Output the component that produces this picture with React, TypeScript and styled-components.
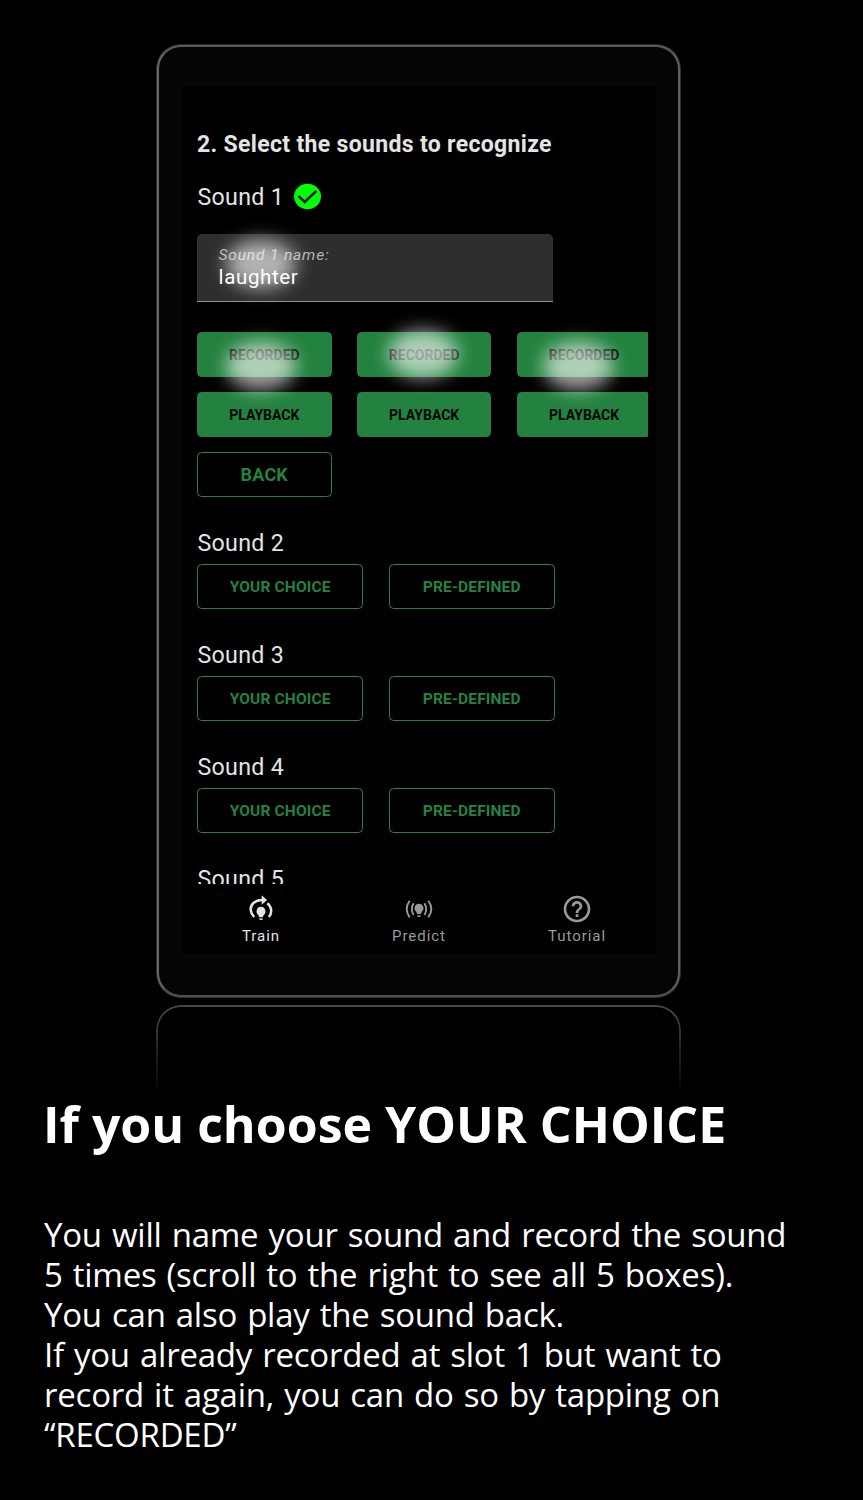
import React from "react";
import styled, { createGlobalStyle } from "styled-components";

const GlobalStyle = createGlobalStyle`
  body { margin: 0; background: #000; }
  * { box-sizing: border-box; }
`;

const Page = styled.main`
  width: 863px;
  height: 1500px;
  padding-top: 45px;
  overflow: hidden;
  background: #000;
  color: #fff;
  font-family: Roboto, "Liberation Sans", sans-serif;
`;

const Device = styled.section`
  width: 523px;
  height: 952px;
  margin-left: 157px;
  padding: 40px 23px;
  background: #050505;
  border: 2px solid;
  border-color: #5a5a5a #606060 #505050 #666;
  border-radius: 24px;
  box-shadow: 0 0 0 1px #2e2e2e;
`;

const Reflection = styled.div`
  width: 525px;
  height: 91px;
  margin: 8px 0 0 156px;
  border: 2px solid #484848;
  border-bottom: 0;
  border-radius: 25px 25px 0 0;
  mask-image: linear-gradient(#000, transparent);
`;

const Screen = styled.div`
  display: flex;
  flex-direction: column;
  width: 474px;
  height: 866px;
  background: #000;
`;

const Content = styled.div`
  height: 797px;
  margin-right: 8px;
  padding: 43px 0 0 15px;
  overflow: hidden;
`;

const Title = styled.h2`
  margin: 0;
  font-size: 23px;
  line-height: 30px;
  font-weight: 700;
  letter-spacing: 0.33px;
  color: #e4e4e4;
  white-space: nowrap;
`;

const Label = styled.div`
  display: flex;
  align-items: center;
  height: 30px;
  padding-left: 0.5px;
  font-size: 23.2px;
  letter-spacing: 0.3px;
  color: #e4e4e4;
`;

const Recorder = styled.div`
  margin-top: 22px;

  ${Label} svg { margin: -2px 0 0 7px; }
`;

const Field = styled.div`
  position: relative;
  width: 356px;
  height: 68.5px;
  margin: 21.5px 0 30px;
  padding: 11px 21.5px 0;
  background: #2e2e2e;
  border-bottom: 1.5px solid #909090;
  border-radius: 5px 5px 0 0;
`;

const FieldName = styled.div`
  font-size: 15.5px;
  line-height: 20px;
  font-style: italic;
  letter-spacing: 0.85px;
  color: #b4b4b4;
`;

const FieldValue = styled.div`
  position: relative;
  z-index: 3;
  font-size: 20.5px;
  line-height: 25px;
  letter-spacing: 0.65px;
`;

const ButtonRow = styled.div<{ $top?: number }>`
  display: flex;
  gap: 25.3px;
  margin-top: ${(p) => p.$top ?? 0}px;
`;

const Button = styled.button<{ $filled?: boolean; $width: number; $size: number; $spacing?: number }>`
  position: relative;
  flex: none;
  width: ${(p) => p.$width}px;
  height: 45px;
  padding: 1px 0 0;
  border: 1.5px solid #23823f;
  border-radius: 4.5px;
  background: ${(p) => (p.$filled ? "#23823f" : "transparent")};
  color: ${(p) => (p.$filled ? "#050505" : "#23823f")};
  font: 700 ${(p) => p.$size}px Roboto, sans-serif;
  letter-spacing: ${(p) => p.$spacing ?? 0}px;
  white-space: nowrap;
`;

const TapGlow = styled.span<{ $x: number; $y: number }>`
  position: absolute;
  z-index: 2;
  left: ${(p) => p.$x}px;
  top: ${(p) => p.$y}px;
  width: 70px;
  height: 48px;
  border-radius: 50%;
  background: rgba(255, 255, 255, 0.63);
  filter: blur(9px);
  pointer-events: none;
`;

const SoundBlock = styled.div`
  margin-top: 31.2px;
`;

const Nav = styled.nav`
  display: grid;
  grid-template-columns: repeat(3, 1fr);
  height: 69px;
`;

const NavItem = styled.div<{ $active?: boolean }>`
  display: flex;
  flex-direction: column;
  align-items: center;
  padding-top: 9px;
  font-size: 15px;
  line-height: 20px;
  letter-spacing: 0.95px;
  color: ${(p) => (p.$active ? "#e4e4e4" : "#999")};

  svg { margin-bottom: 1px; }
`;

const Caption = styled.section`
  padding: 0 43px;
  font-family: "Open Sans", "Noto Sans", sans-serif;
`;

const Heading = styled.h1`
  margin: -2px 0 61px;
  font-size: 50px;
  line-height: 60px;
  font-weight: 700;
  white-space: nowrap;
`;

const Line = styled.p`
  margin: 0;
  padding-left: 1px;
  font-size: 33px;
  line-height: 40px;
  white-space: nowrap;
  letter-spacing: -0.23px;
  word-spacing: 1.75px;
`;

const CheckIcon = () => (
  <svg width="33" height="31" viewBox="0 0 24 24" preserveAspectRatio="none">
    <circle cx="12" cy="12" r="9.8" fill="#0f0" />
    <path d="M5.500 11.800l4.500 4.400 8.500-8.500" fill="none" stroke="#111" strokeWidth="1.9" />
  </svg>
);

const Bulb = () => (
  <g fill="currentColor">
    <path d="M14 10.2a4.6 4.6 0 0 1 2.7 8.2l-.9 2.2h-3.6l-.9-2.2A4.6 4.6 0 0 1 14 10.2z" />
    <rect x="12.4" y="21.8" width="3.2" height="1.5" />
  </g>
);

const TrainIcon = () => (
  <svg width="28" height="32" viewBox="0 0 28 32">
    <g transform="translate(0 3.6)">
      <Bulb />
    </g>
    <path d="M7.2 24C2.8 19.5 2.4 13.600 6.500 10 8.800 7.900 11.500 7.100 15 7.100M20.300 10.200c4.400 3.600 5.300 9.300 1.500 13.800" fill="none" stroke="currentColor" strokeWidth="2.5" />
    <path d="M14.700 2.200l5.400 4.900-5.400 4.700z" fill="currentColor" />
  </svg>
);

const PredictIcon = () => (
  <svg width="28" height="32" viewBox="0 0 28 32">
    <g transform="translate(0 0.500)">
      <Bulb />
    </g>
    <path d="M8.600 10.200c-2.300 3.700-2.300 8.100 0 11.800M19.400 10.200c2.300 3.700 2.300 8.100 0 11.800M4.700 7.800c-3.800 5.200-3.800 11.400 0 16.600M23.300 7.800c3.800 5.200 3.800 11.400 0 16.600" fill="none" stroke="currentColor" strokeWidth="1.9" />
  </svg>
);

const HelpIcon = () => (
  <svg width="32" height="32" viewBox="0 0 24 24">
    <path
      fill="currentColor"
      d="M11 18h2v-2h-2v2zm1-16C6.48 2 2 6.48 2 12s4.48 10 10 10 10-4.480 10-10S17.520 2 12 2zm0 18c-4.410 0-8-3.590-8-8s3.590-8 8-8 8 3.590 8 8-3.590 8-8 8zm0-14c-2.210 0-4 1.790-4 4h2c0-1.100.9-2 2-2s2 .9 2 2c0 2-3 1.750-3 5h2c0-2.250 3-2.500 3-5 0-2.210-1.790-4-4-4z"
    />
  </svg>
);

const recordings = [
  { x: 28, y: 9 },
  { x: 30, y: -3 },
  { x: 25, y: 9 },
];

const sounds = ["Sound 2", "Sound 3", "Sound 4", "Sound 5"];

const lines = [
  "You will name your sound and record the sound",
  "5 times (scroll to the right to see all 5 boxes).",
  "You can also play the sound back.",
  "If you already recorded at slot 1 but want to",
  "record it again, you can do so by tapping on",
  "“RECORDED”",
];

export default function App() {
  return (
    <>
      <GlobalStyle />
      <Page>
        <Device>
          <Screen>
            <Content>
              <Title>2. Select the sounds to recognize</Title>
              <Recorder>
                <Label>
                  Sound 1 <CheckIcon />
                </Label>
                <Field>
                  <FieldName>Sound 1 name:</FieldName>
                  <FieldValue>laughter</FieldValue>
                  <TapGlow $x={29} $y={6} />
                </Field>
                <ButtonRow>
                  {recordings.map((tap, i) => (
                    <Button key={i} $filled $width={134.6} $size={14}>
                      RECORDED
                      <TapGlow $x={tap.x} $y={tap.y} />
                    </Button>
                  ))}
                </ButtonRow>
                <ButtonRow $top={14.8}>
                  {recordings.map((_, i) => (
                    <Button key={i} $filled $width={134.6} $size={14}>
                      PLAYBACK
                    </Button>
                  ))}
                </ButtonRow>
                <ButtonRow $top={14.8}>
                  <Button $width={134.6} $size={18} $spacing={0.2}>BACK</Button>
                </ButtonRow>
              </Recorder>
              {sounds.map((name) => (
                <SoundBlock key={name}>
                  <Label>{name}</Label>
                  <ButtonRow $top={6}>
                    <Button $width={166.3} $size={15.5} $spacing={0.15}>YOUR CHOICE</Button>
                    <Button $width={166.3} $size={15.5} $spacing={0.15}>PRE-DEFINED</Button>
                  </ButtonRow>
                </SoundBlock>
              ))}
            </Content>
            <Nav>
              <NavItem $active><TrainIcon />Train</NavItem>
              <NavItem><PredictIcon />Predict</NavItem>
              <NavItem><HelpIcon />Tutorial</NavItem>
            </Nav>
          </Screen>
        </Device>
        <Reflection />
        <Caption>
          <Heading>If you choose YOUR CHOICE</Heading>
          {lines.map((line) => (
            <Line key={line}>{line}</Line>
          ))}
        </Caption>
      </Page>
    </>
  );
}
